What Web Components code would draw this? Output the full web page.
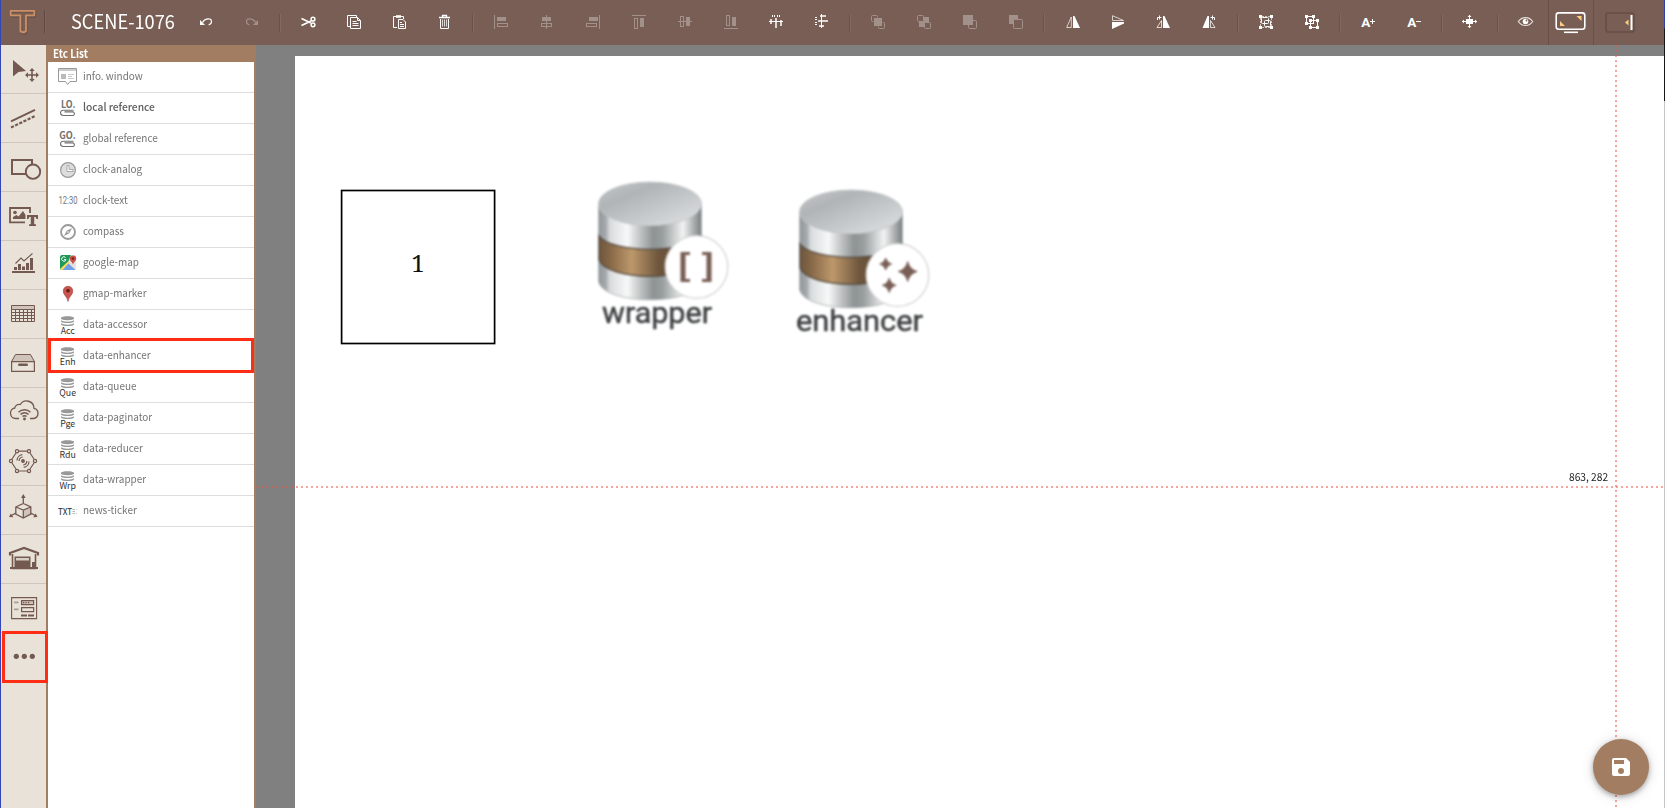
<!DOCTYPE html>
<html lang="en">
<head>
<meta charset="utf-8">
<title>SCENE-1076</title>
<style>
html,body{margin:0;height:100%;overflow:hidden}
body{font-family:"Noto Sans CJK KR","Noto Sans CJK SC","Open Sans",sans-serif}
</style>
</head>
<body>
<scene-app></scene-app>
<script>
const define = (name, css, html) => customElements.define(name, class extends HTMLElement {
  constructor() {
    super();
    const t = document.createElement('template');
    t.innerHTML = `<style>:host{box-sizing:border-box}*{box-sizing:border-box}${css}</style>` + (typeof html === 'function' ? html(this) : html);
    this.attachShadow({ mode: 'open' }).appendChild(t.content.cloneNode(true));
  }
});

/* ---- toolbar glyphs, 24x24 ---- */
const box = (x, y, w, h) => `<path d="M${x} ${y}h${w}v${h}h-${w}z"/>`;
const frame = (x, y, w, h, extra = '') => `<rect x="${x + .5}" y="${y + .5}" width="${w - 1}" height="${h - 1}" fill="none" stroke="currentColor" ${extra}/>`;
const BAR = {
  undo: `<path d="M6 10v5h5z"/><path d="M8.500 12.500C10.500 8 17.500 7.500 17.500 11.500c0 1.700-.9 2.800-2.800 3.300" fill="none" stroke="currentColor" stroke-width="1.200"/>`,
  redo: `<path d="M18 10v5h-5z"/><path d="M15.500 12.500C13.500 8 6.500 7.500 6.500 11.500c0 1.700.9 2.800 2.800 3.300" fill="none" stroke="currentColor" stroke-width="1.200"/>`,
  cut: `<g fill="none" stroke="currentColor"><path d="M5.500 8.500l9.500 4.500M5.500 15.500l9.500-4.500" stroke-width="1.700"/><circle cx="17" cy="9.200" r="1.900" stroke-width="1.500"/><circle cx="17" cy="14.800" r="1.900" stroke-width="1.500"/></g>`,
  copy: `<g fill="none" stroke="currentColor"><path d="M8 16.500H5.500v-11h9V7"/><path d="M8.500 7.500h7l3 3v8h-10z"/><path d="M15.500 7.500v3h3M10.500 11.500h4M10.500 13.500h6M10.500 15.500h6"/></g>`,
  paste: `<g fill="none" stroke="currentColor"><path d="M9 17.500H5.500v-11h10V9"/><path d="M8 6.500h5" stroke-width="2.600"/><path d="M10.500 9.500h4.500l2.500 2.500v6.500h-7z"/><path d="M12 12.500h2M12 14.500h4M12 16.500h4"/></g>`,
  trash: `<g fill="none" stroke="currentColor"><path d="M5 7.500h11M8.500 7V5.500h4V7" stroke-width="1.300"/><path d="M6.500 9v9.500h8V9"/><path d="M8.500 9.500v7M10.500 9.500v7M12.500 9.500v7" opacity=".75"/></g>`,
  left: box(5, 5, 1, 14) + box(8, 7, 9, 4) + frame(8, 13, 11, 4),
  center: box(11, 5, 1, 14) + box(7, 7, 9, 4) + frame(6, 13, 11, 4),
  right: box(18, 5, 1, 14) + box(8, 7, 9, 4) + frame(5, 13, 11, 4),
  top: box(5, 5, 14, 1) + box(13, 8, 4, 9) + frame(7, 8, 4, 11),
  middle: box(5, 11, 14, 1) + box(13, 7, 4, 9) + frame(7, 6, 4, 11),
  bottom: box(5, 18, 14, 1) + box(13, 7, 4, 9) + frame(7, 5, 4, 11),
  disth: `<g opacity=".75">${box(5, 9, 2, 5)}${box(10, 8, 2, 10)}${box(15, 10, 2, 6)}</g>` + box(4, 11, 14, 1) + [7, 9, 12, 14].map(x => box(x, 5, 1, 2)).join(''),
  distv: `<g opacity=".75">${box(10, 5, 6, 2)}${box(8, 10, 10, 2)}${box(9, 15, 5, 2)}</g>` + box(11, 4, 1, 14) + [7, 9, 12, 14].map(y => box(5, y, 2, 1)).join(''),
  forward: frame(5, 5, 7, 7, 'rx="1"') + frame(12, 12, 7, 7, 'rx="1"') + `<path d="M7.500 7.500h9v9h-9z" fill="#785e54"/>` + box(8, 8, 8, 8),
  backward: box(7, 7, 10, 10) + `<g class="bg"><rect x="5.500" y="5.500" width="6" height="6" rx="1"/><rect x="12.500" y="12.500" width="6" height="6" rx="1"/></g>`,
  front: frame(10, 10, 9, 9, 'rx="1"') + box(5, 5, 10, 10),
  back: box(5, 5, 9, 9) + `<g class="bg"><rect x="9.500" y="9.500" width="9" height="9" rx="1"/></g>`,
  fliph: `<path d="M11.300 7v10.500H6.700z" fill="none" stroke="currentColor" opacity=".7"/><path d="M13 6h1.500L20 18h-7z"/>`,
  flipv: `<path d="M6.500 5.700v4.800h11z" fill="none" stroke="currentColor" opacity=".7"/><path d="M6 12h12v1.500L6 19z"/>`,
  rotr: `<path d="M9.500 10.500v7H5z" fill="none" stroke="currentColor" opacity=".75"/><path d="M11 6h1.500L18 18h-7z"/><path d="M5.500 10V7.500h4M7.500 5.500v4" fill="none" stroke="currentColor"/>`,
  rotl: `<path d="M12.500 10.500v7H17z" fill="none" stroke="currentColor" opacity=".75"/><path d="M11 6H9.500L4.500 18H11z"/><path d="M16.500 10V7.500h-4M14.500 5.500v4" fill="none" stroke="currentColor"/>`,
  group: `<path d="M8 6.500h8M6.500 8v8M17.500 8v8M8 17.500h8" fill="none" stroke="currentColor" opacity=".65" stroke-dasharray="2 1"/>` + box(5, 5, 3, 3) + box(16, 5, 3, 3) + box(5, 16, 3, 3) + box(16, 16, 3, 3) + frame(7, 7, 8, 7, 'rx="1"') + frame(10, 10, 7, 7, 'rx="1"'),
  ungroup: frame(6, 6, 8, 8) + frame(10, 10, 8, 8) + [[5, 5], [12, 5], [5, 12], [9, 9], [16, 9], [9, 16], [16, 16]].map(p => box(p[0], p[1], 3, 3)).join(''),
  bigger: `<text x="5.300" y="17" font-family="Roboto" font-weight="700" font-size="13.500">A</text>` + box(14, 11, 5, 1) + box(16, 9, 1, 5),
  smaller: `<text x="5.300" y="17" font-family="Roboto" font-weight="700" font-size="13.500">A</text>` + box(14, 11, 5, 1),
  move: box(8, 9, 7, 5) + box(4, 11, 15, 1) + box(11, 5, 1, 13) + `<path d="M4 11.500l2-2v4zM19 11.500l-2-2v4zM11.500 5l-2 2h4zM11.500 18l-2-2h4z"/>`,
  eye: `<path d="M5.300 11.500c3.500-5.300 10.900-5.300 14.400 0-3.500 5.300-10.900 5.300-14.400 0z" fill="none" stroke="currentColor" stroke-width="1.200" opacity=".8"/><circle cx="12.500" cy="11.500" r="2.800"/><circle cx="13.500" cy="10.500" r=".9" fill="#785e54"/>`
};
const GROUPS = [
  [10, 'undo', '-redo'], [10, 'cut', 'copy', 'paste', 'trash'],
  [9, '-left', '-center', '-right', '-top', '-middle', '-bottom', 'disth', 'distv'],
  [10, '-forward', '-backward', '-front', '-back'], [10, 'fliph', 'flipv', 'rotr', 'rotl'],
  [10, 'group', 'ungroup'], [10, 'bigger', 'smaller'], [10, 'move'], [9, 'eye']
];
define('bar-button', `:host{display:flex;width:46px;height:44px;align-items:center;justify-content:center;color:#fff}
:host([disabled]){color:#a2918a}`, '<slot></slot>');
customElements.define('bar-icon', class extends HTMLElement {
  connectedCallback() {
    if (this.shadowRoot) return;
    this.attachShadow({ mode: 'open' }).innerHTML = `<style>:host{display:block;height:24px}svg{display:block}.bg rect{fill:#785e54;stroke:currentColor}</style>
      <svg width="24" height="24" fill="currentColor">${BAR[this.getAttribute('name')]}</svg>`;
  }
});
define('app-toolbar', `:host{display:flex;height:45px;flex:none;background:#785e54}
.logo{width:43px;height:45px}.sep{width:10px;height:18px;margin-top:14px;display:flex;justify-content:center}
.sep i{width:2px;border-left:1px solid #6b5249;border-right:1px solid #84695f}
.logo + i{width:2px;height:23px;margin-top:10px;border-left:1px solid #5f493f;border-right:1px solid #80675d}
h1{margin:0;width:137px;padding-left:25px;font-size:19.500px;font-weight:400;line-height:41px;color:#fff;white-space:nowrap}
h1 span{display:inline-block;transform:scaleX(.935);transform-origin:0 50%}
.n{width:9px}.end{display:flex;margin-left:auto}.end svg{display:block;border-left:1px solid #6a5148}`,
`<svg class="logo" viewBox="0 0 43 45"><path d="M9.500 10.500h24v5h-8.500v16q-3 2-5.500 0v-16h-10z" transform="translate(1 1.500)" fill="none" stroke="#5c463e" stroke-width="1.500" opacity=".45"/><path d="M9.700 10.900h23.600v4.400H25V31q-2.800 2.500-5.600 0V15.300H9.700z" fill="none" stroke="#cb8f65" stroke-width="1.800" stroke-linejoin="round"/></svg><i></i>
<h1><span>SCENE-1076</span></h1>
${GROUPS.map((g, i) => (i ? `<div class="sep${g[0] === 9 ? ' n' : ''}"><i></i></div>` : '') + g.slice(1).map(n => `<bar-button${n[0] === '-' ? ' disabled' : ''}><bar-icon name="${n.replace('-', '')}"></bar-icon></bar-button>`).join('')).join('')}
<div class="end"><svg width="45" height="45"><rect x="7.200" y="12.900" width="28.600" height="16.400" rx="2.500" fill="none" stroke="#fff" stroke-width="1.600"/><path d="M15 32.300h14" stroke="#fff" stroke-width="1.600"/><path d="M27.500 16h5v5zM11 21v5h5z" fill="#ffcc80"/></svg>
<svg width="71" height="45"><rect x="12" y="13" width="28" height="19" rx="2" fill="none" stroke="#654e45" stroke-width="1.600"/><path d="M36.500 15h2v15h-2z" fill="#fff"/><path d="M34.500 19.500v6l-3.500-3z" fill="#ffcc80"/></svg></div>`);

/* ---- left rail, 45x48 glyphs ---- */
const C = '#73594f';
const st = (w = 1.5) => `fill="none" stroke="${C}" stroke-width="${w}"`;
const RAIL = [
  `<path d="M12 15l13 11-7.500 1L12 31.500z" fill="${C}"/><path d="M31 24.500v11M25.500 30h11" ${st(1.6)}/><path d="M31 23l-2.700 3h5.400zM31 37l-2.700-3h5.400zM24 30l3-2.700v5.400zM38 30l-3-2.700v5.400z" fill="${C}"/>`,
  `<path d="M10 27.300l24-11.500" ${st(2)}/><path d="M10 33.500l24-11.500" ${st(2.2)} stroke-dasharray="3.200 1.400"/>`,
  `<path d="M25 31H11V17h20v4" ${st(2)}/><circle cx="32" cy="28.700" r="7.200" ${st(1.9)}/>`,
  `<path d="M24 30.300H9V16h20v5" ${st(1.8)}/><circle cx="14" cy="20.500" r="1.800" fill="${C}"/><path d="M12 27v-2l3.500-2 2 1.500 4.500-5.500 2.500 4v4z" fill="${C}"/><path d="M26 23h11v4h-1.500l-.8-2h-1.500v7l1.800.5V34h-7v-1.500l1.800-.5v-7h-1.500l-.8 2H26z" fill="${C}"/>`,
  `<path d="M11 30h23v2H11zM13 26h3v3h-3zM17 23h3v6h-3zM21 25.500h3V29h-3zM25 22h3v7h-3zM29 17h3v12h-3z" fill="${C}"/><path d="M14.500 22.500l5.500-5.500 3 3 8.500-7.500" ${st(1.1)}/>`,
  `<path d="M10.500 15.500h23v4h-23z" fill="#cfc3ba"/><path d="M10.500 15.500h23v16h-23zM10.500 19.500h23M10.500 22.500h23M10.500 25.500h23M10.500 28.500h23M14.500 19.500v12M18.500 19.500v12M22.500 19.500v12M26.500 19.500v12M30.500 19.500v12" ${st(1)}/>`,
  `<path d="M10.600 22.500L14.500 15.500h15l3.900 7z" fill="#cfc3ba" stroke="${C}"/><path d="M10.600 22.600h22.800v9.800H10.600z" ${st(1.2)}/><path d="M18.300 25.700h7.400" ${st(2.6)} stroke-linecap="round"/>`,
  `<path d="M18 30.500h-3.500a5.300 5.300 0 0 1-.7-10.500 4.300 4.300 0 0 1 5.500-3.500 7.400 7.400 0 0 1 13.700 3.800 5.200 5.200 0 0 1-.5 10.200H29" ${st(1.300)}/><path d="M17.500 24.200a8.500 8.500 0 0 1 12 0M19.500 26.500a5.500 5.500 0 0 1 8 0M21.500 28.600a2.800 2.800 0 0 1 4 0" ${st(1.4)}/><circle cx="23.500" cy="31" r="1.400" fill="${C}"/>`,
  `<g ${st(1.200)}><path d="M18 14.200h8M18 34h8M15 16l-4 6M11 26l4 6M29 16l4 6M33 26l-4 6"/><g fill="#e9e2d9"><circle cx="16" cy="14.200" r="1.600"/><circle cx="28" cy="14.200" r="1.600"/><circle cx="34" cy="24" r="1.600"/><circle cx="28" cy="34" r="1.600"/><circle cx="16" cy="34" r="1.600"/><circle cx="10" cy="24" r="1.600"/></g><path d="M18.200 24a4 4 0 0 1 3.500-4M16 23.500a6 6 0 0 1 5.300-5.800M25.800 24a4 4 0 0 1-3.500 4M28 24.500a6 6 0 0 1-5.300 5.800"/></g><circle cx="22" cy="24" r="1.900" fill="${C}"/>`,
  `<path d="M22.300 17.500l7.500 3.500-7.500 3-7.500-3z" fill="#e9e2d9"/><path d="M22.300 24l7.500-3v7l-7.500 4z" fill="#cfc3ba"/><g ${st(1.300)}><path d="M14.800 21l7.500-3.500 7.500 3.500v7l-7.500 4-7.500-4zM14.800 21l7.500 3 7.500-3M22.300 24v8M22.300 17.500V11M14.800 27L9.500 30M29.800 27l5.300 3"/></g><path d="M22.300 8l-2.300 4h4.600zM8 31l1.800-3.500 2.500 3.700zM36.500 31l-1.800-3.500-2.500 3.700z" fill="${C}"/>`,
  `<path d="M9 20.500v-2.500L23 13l14 5v2.500" ${st(2.200)}/><path d="M11.500 19v14.500h23V19" ${st(1.6)}/><path d="M9 32h7v2H9zM13.500 21.500h16V33h-16zM31 27h4v7h-4zM27 32h10v2H27z" fill="${C}"/><path d="M15 23h13v2.500H15z" fill="#d9cec5"/>`,
  `<path d="M10.600 13.600h25v21h-25z" ${st(1.100)}/><path d="M13 17.500h4.500v1.700H13zM13 24.500h4.500v1.700H13z" fill="#ab9a90"/><path d="M20.600 16.600h12v4h-12z" fill="#cfc3ba" stroke="${C}" stroke-width="1.200"/><path d="M20.600 23.600h12v4h-12z" ${st(1.2)}/><path d="M20 30.500h6v2h-6zM27 30.500h6v2h-6zM22 18h1.300v1.300H22zM24.500 18h1.300v1.300h-1.300zM27 18h1.300v1.300H27z" fill="${C}"/>`,
  `<circle cx="15.300" cy="23.300" r="2.600" fill="${C}"/><circle cx="23.300" cy="23.300" r="2.600" fill="${C}"/><circle cx="31.300" cy="23.300" r="2.600" fill="${C}"/>`
];
define('tool-rail', `:host{display:flex;flex-direction:column;width:45px;flex:none;background:#e9e2d9}
div{height:49px;flex:none;border-bottom:1px solid #cfc6bd;position:relative}div:last-child{border-color:transparent}svg{display:block}
.mark{position:absolute;left:1px;top:-2px;width:46px;height:52px;border:3px solid #ff2d13;z-index:3}`,
RAIL.map((g, i) => `<div><svg width="45" height="48">${g}</svg>${i === 12 ? '<span class="mark"></span>' : ''}</div>`).join(''));

/* ---- component list, 30x30 glyphs ---- */
const clip = `<path d="M20.500 17.200H10.200a2.600 2.600 0 0 0 0 5.300H20.300a2 2 0 0 0 0-3.600H11.500" fill="none" stroke="#6f6f6f" stroke-width="1.100"/>`;
const disks = t => `<path d="M8 8c0-2.200 13-2.200 13 0v.6c0 2.200-13 2.200-13 0z" fill="#999"/><path d="M8 10.200c2 1.900 11 1.900 13 0v1.300c-1 2-12 2-13 0zM8 13.200c2 1.900 11 1.900 13 0v1.300c-1 2-12 2-13 0z" fill="#999"/><text x="14.700" y="24.300" text-anchor="middle" font-size="8.800" fill="#333">${t}</text>`;
const ITEMS = [
  ['info. window', `<path d="M5.500 6.500h18v13H17l-2.300 3-2.300-3H5.500z" fill="#fff" stroke="#999"/><path d="M6 7h17v2H6z" fill="#ccc"/><path d="M8 12h5v5H8z" fill="#bbb"/><path d="M15 12.500h6M15 14.500h4M15 16.500h6" stroke="#ccc"/>`],
  ['local reference', `<text x="8" y="14.800" font-size="9.800" font-weight="700" fill="#6f6f6f" textLength="14.500" lengthAdjust="spacingAndGlyphs">LO.</text>${clip}`],
  ['global reference', `<text x="6.300" y="14.800" font-size="9.800" font-weight="700" fill="#6f6f6f" textLength="16.500" lengthAdjust="spacingAndGlyphs">GO.</text>${clip}`],
  ['clock-analog', `<circle cx="15" cy="15" r="7.400" fill="#ddd" stroke="#999" stroke-width="1.200"/><path d="M14 10.500h2v4h4v2h-6z" fill="#fff" stroke="#999" stroke-width=".8"/>`],
  ['clock-text', `<text x="5.500" y="18.200" font-family="Roboto" font-size="10" fill="#777" textLength="19" lengthAdjust="spacingAndGlyphs">12:30</text>`],
  ['compass', `<circle cx="15" cy="15" r="7" fill="#fff" stroke="#999" stroke-width="1.800"/><path d="M19 11l-2.700 5.300L11 19l2.700-5.300z" fill="#999"/><circle cx="15" cy="15" r=".8" fill="#fff"/>`],
  ['google-map', `<rect x="7" y="7" width="16" height="15" rx="1.500" fill="#e5e3df"/><path d="M8.500 7H18l-3 7-8 8V8.500z" fill="#1e9a58"/><path d="M7 21l8-7.500 2 2L9.500 22H8z" fill="#fdd663"/><path d="M15.500 15.500l7 6.500H9.500z" fill="#6d9eeb"/><path d="M12.500 9.500a2.200 2.200 0 1 0 .5 2h-1.800" fill="none" stroke="#fff"/><path d="M20 17c-.5-3-3.200-3.800-3.200-6.400a3.200 3.200 0 0 1 6.400 0c0 2.600-2.700 3.400-3.200 6.400z" fill="#c94f46"/><circle cx="20" cy="10.600" r="1.200" fill="#6d1f1b"/>`],
  ['gmap-marker', `<path d="M15 22.500c-.7-5-4.800-6.300-4.800-10.500a4.800 4.800 0 0 1 9.600 0c0 4.200-4.100 5.500-4.800 10.500z" fill="#c8544d" stroke="#a94640" stroke-width=".6"/><circle cx="15" cy="11.700" r="1.800" fill="#5c1b18"/>`],
  ['data-accessor', disks('Acc')], ['data-enhancer', disks('Enh')], ['data-queue', disks('Que')],
  ['data-paginator', disks('Pge')], ['data-reducer', disks('Rdu')], ['data-wrapper', disks('Wrp')],
  ['news-ticker', `<text x="5" y="19" font-size="9.500" font-weight="500" fill="#444" textLength="14" lengthAdjust="spacingAndGlyphs">TXT</text><path d="M19.500 13.500h2.500M19.500 15.500h2.500M19.500 17.500h2.500" stroke="#aaa" stroke-width=".9"/><path d="M23 13.500h1.200M23 17.500h1.200" stroke="#ccc" stroke-width=".9"/>`]
];
define('part-list', `:host{display:flex;flex-direction:column;width:210px;flex:none;background:#fff;border:solid #a37d61;border-width:0 2px}
h2{margin:0;height:17px;background:#a37d61;color:#fff;font-size:11px;font-weight:700;line-height:17px;padding-left:5px}
h2 span,div span{display:block;transform:scaleX(.905);transform-origin:0 50%}
div{display:flex;height:31px;flex:none;border-bottom:1px solid #ddd;padding-left:5px;font-size:11px;line-height:27px;color:#757575;position:relative;white-space:nowrap}
div:nth-of-type(2){font-weight:500;color:#5c5c5c}div:nth-of-type(2) span{transform:scaleX(.93)}svg{display:block;flex:none}
.mark{position:absolute;left:0;top:-3px;width:206px;height:35px;border:3px solid #ff2d13}`,
`<h2><span>Etc List</span></h2>` + ITEMS.map((r, i) => `<div><svg width="30" height="30">${r[1]}</svg><span>${r[0]}</span>${i === 9 ? '<b class="mark"></b>' : ''}</div>`).join(''));

/* ---- database node on the canvas ---- */
const BADGE = {
  wrapper: `<path d="M99 76h9.500v3h-4.500v24h4.500v3H99zM130 76h-9.500v3h4.500v24h-4.500v3h9.500z" fill="#785e54"/>`,
  enhancer: `<path d="M125.500 78.500q2 8 9.500 10-7.500 2-9.500 10-2-8-9.500-10 7.500-2 9.500-10zM103.500 75q1.500 5 6 6-4.500 1-6 6-1.500-5-6-6 4.500-1 6-6zM107 95q1.700 6 7 7.300-5.300 1.300-7 7.300-1.700-6-7-7.300 5.300-1.300 7-7.300z" fill="#785e54" stroke="#785e54" stroke-width=".8"/>`
};
customElements.define('data-node', class extends HTMLElement {
  connectedCallback() {
    if (this.shadowRoot) return;
    const k = this.getAttribute('kind'), w = k === 'wrapper';
    this.attachShadow({ mode: 'open' }).innerHTML = `<style>:host{display:block}svg{display:block;filter:blur(.8px)}</style>
<svg width="160" height="160">
<defs><linearGradient id="m"><stop offset="0" stop-color="#92989a"/><stop offset=".07" stop-color="#a4a9ab"/><stop offset=".11" stop-color="#d9dcdd"/><stop offset=".28" stop-color="#f7f8f8"/><stop offset=".4" stop-color="#c3c6c7"/><stop offset=".53" stop-color="#8e9394"/><stop offset=".62" stop-color="#989d9e"/><stop offset=".82" stop-color="#f2f3f3"/><stop offset="1" stop-color="#777d7f"/></linearGradient>
<linearGradient id="t" x2="1" y2="1"><stop offset="0" stop-color="#c5c9ca"/><stop offset=".3" stop-color="#b0b4b6"/><stop offset="1" stop-color="#e0e3e4"/></linearGradient>
<linearGradient id="b"><stop offset="0" stop-color="#6d553d"/><stop offset=".12" stop-color="#8a6a48"/><stop offset=".32" stop-color="#bd986b"/><stop offset=".58" stop-color="#6f573d"/><stop offset="1" stop-color="#4f3c2b"/></linearGradient></defs>
<g transform="translate(0 -1.200)"><path d="M8.500 34v78c6 24 97 24 103 0V34z" fill="url(#m)" stroke="#a9adaf" stroke-width=".8"/>
<path d="M9 66c12 18 90 18 102 0v24c-8 22-94 22-102 0z" fill="url(#b)" stroke="#554d43" stroke-width="1.200"/>
<ellipse cx="60" cy="34" rx="51.500" ry="21.800" fill="url(#t)" stroke="#c4c8c9"/></g>
<circle cx="106.500" cy="96" r="31.300" fill="#fff" stroke="#d3d3d3" stroke-width="1.300"/>
<g transform="${w ? 'translate(-8.500 5)' : 'translate(-8.800 4)'}">${BADGE[k]}</g>
<text x="${w ? 12 : 5}" y="151.500" font-family="Roboto" font-size="29" fill="#3f4143" stroke="#3f4143" stroke-width=".5" textLength="${w ? 110 : 127}" lengthAdjust="spacingAndGlyphs">${k}</text></svg>`;
  }
});
define('scene-board', `:host{display:block;flex:1;background:#808080;position:relative;padding:11px 0 0 39px;overflow:hidden}
.page{height:100%;background:#fff}
data-node,.one,.h,.v,.pos,.save{position:absolute}
.one{left:84px;top:144px}.one svg{display:block}
.h{left:0;right:0;top:441px;height:2px;background:repeating-linear-gradient(90deg,rgba(244,81,64,.52) 0 2px,transparent 2px 5px)}
.v{top:0;bottom:0;left:1359px;width:2px;background:repeating-linear-gradient(180deg,rgba(244,81,64,.52) 0 2px,transparent 2px 5px)}
.pos{right:56px;top:422px;font-size:11px;line-height:18px;color:#222;transform:scaleX(.93);transform-origin:100% 50%}
.save{left:1337px;top:694px;width:56px;height:56px;border-radius:50%;background:#a37d61;box-shadow:0 2px 5px rgba(0,0,0,.3),0 1px 14px rgba(0,0,0,.14);display:flex;align-items:center;justify-content:center}`,
`<div class="page"></div><div class="one"><svg width="157" height="157"><rect x="1.600" y="1.500" width="153" height="153" fill="none" stroke="#000" stroke-width="1.700"/><text x="78" y="83" text-anchor="middle" font-family="Noto Serif,Liberation Serif,serif" font-size="24" fill="#111">1</text></svg></div>
<data-node kind="wrapper" style="left:334px;top:126px"></data-node><data-node kind="enhancer" style="left:535px;top:134px"></data-node>
<div class="h"></div><div class="v"></div><div class="pos">863, 282</div>
<div class="save"><svg width="24" height="24" fill="#fff"><path d="M17 3H5a2 2 0 0 0-2 2v14c0 1.100.9 2 2 2h14c1.100 0 2-.9 2-2V7zm-5 16a3 3 0 1 1 0-6 3 3 0 0 1 0 6zm3-10H5V5h10z"/></svg></div>`);
define('scene-app', `:host{display:grid;grid-template-columns:1px 1fr 1px;height:100vh}
.l{background:#3346b5}.r{background:linear-gradient(#2d40a6 0 28px,#171717 29px 101px,#c4c8c4 101px)}
.c{display:flex;flex-direction:column;min-width:0;height:100vh}.m{display:flex;flex:1;min-height:0}`,
`<div class="l"></div><div class="c"><app-toolbar></app-toolbar><div class="m"><tool-rail></tool-rail><part-list></part-list><scene-board></scene-board></div></div><div class="r"></div>`);
</script>
</body>
</html>
